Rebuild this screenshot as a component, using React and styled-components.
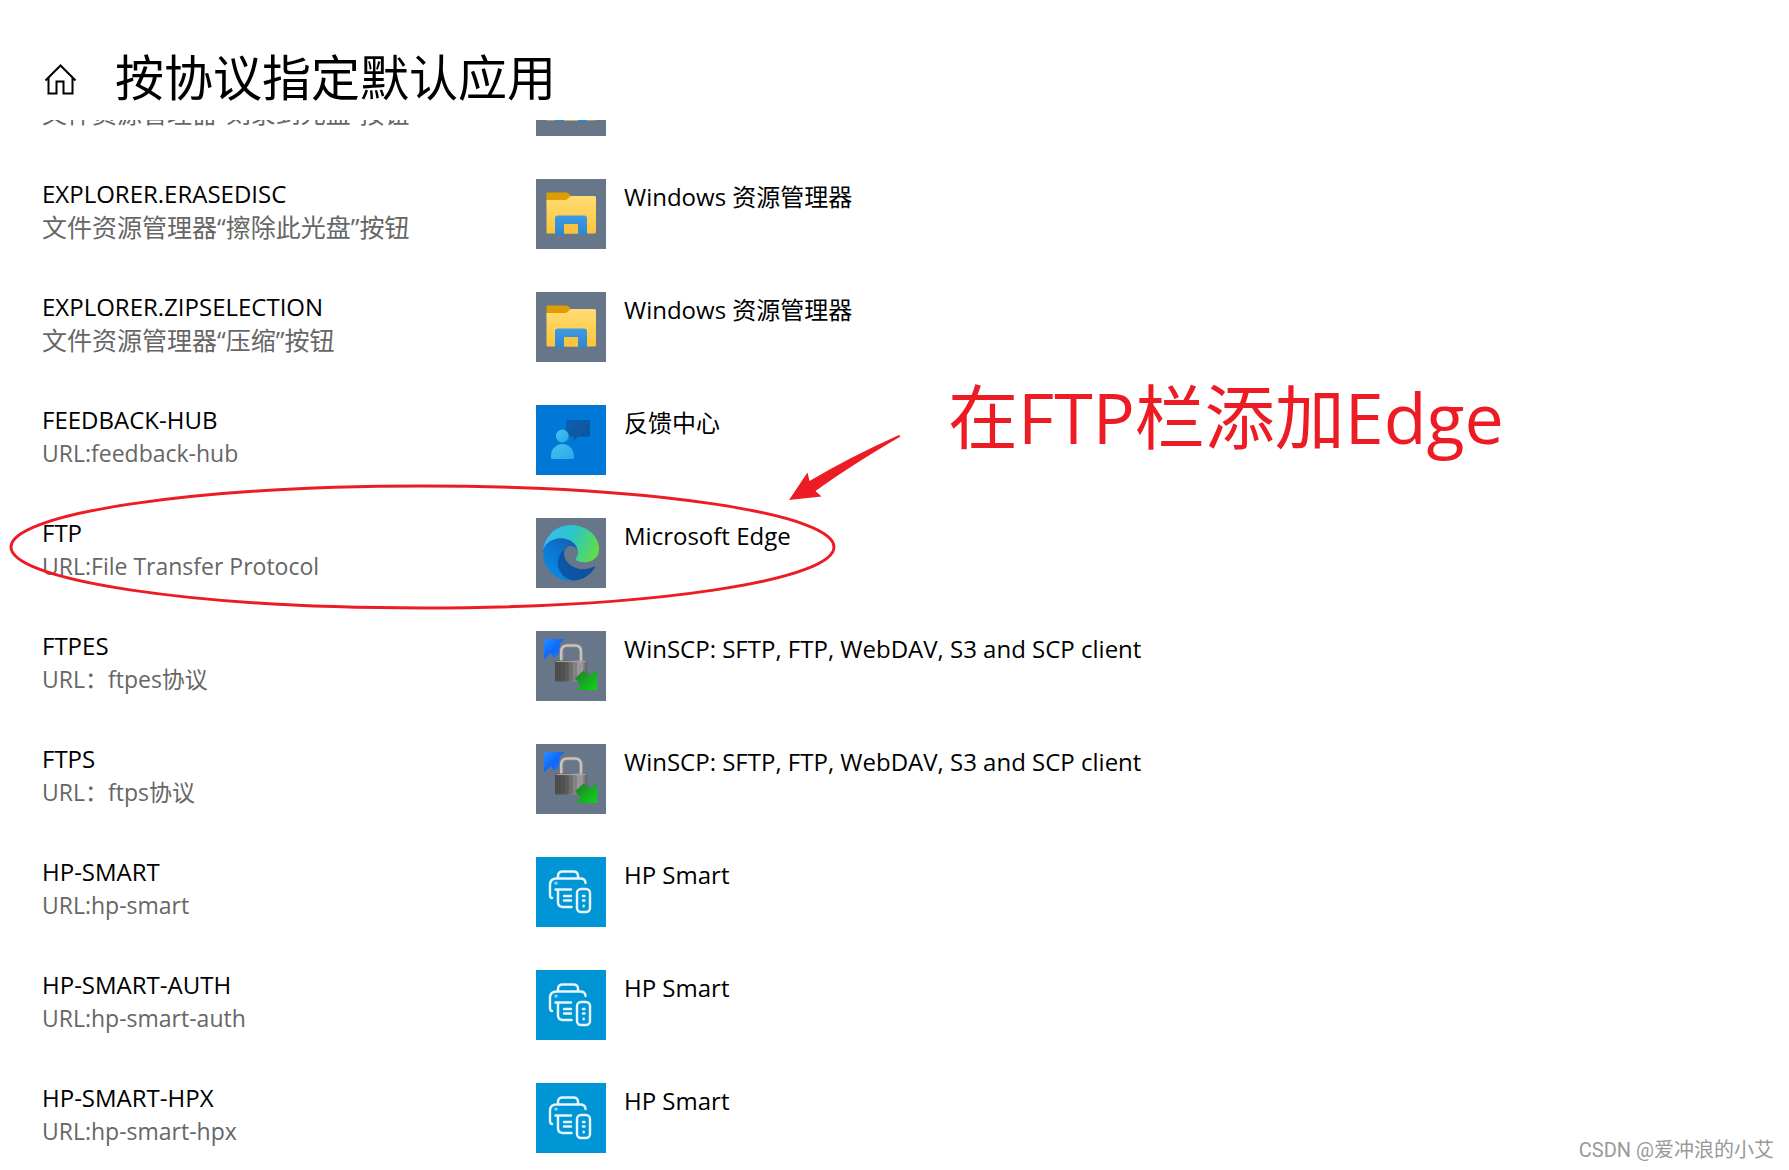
import React from "react"
import styled, { createGlobalStyle } from "styled-components"

const GlobalStyle = createGlobalStyle`
  * {
    box-sizing: border-box;
  }
  body {
    margin: 0;
    background: #fff;
    color: #000;
    font-family: "Open Sans", "Noto Sans CJK SC", sans-serif;
    font-size: 24px;
    line-height: 33px;
  }
`

const FolderIcon = () => (
  <svg viewBox="0 0 70 70" aria-hidden="true">
    <defs>
      <linearGradient id="folder" x1="0" y1="0" x2="0" y2="1">
        <stop offset="0" stopColor="#ffdc74" />
        <stop offset="1" stopColor="#fcc537" />
      </linearGradient>
      <linearGradient id="stand" x1="0" y1="0" x2="0" y2="1">
        <stop offset="0" stopColor="#3e9ae6" />
        <stop offset="1" stopColor="#2f86cb" />
      </linearGradient>
    </defs>
    <path d="M11.500 13.500H30q1.500 0 2.500 1l3 3v8H10.500v-11q0-1 1-1z" fill="#de9d00" />
    <path d="M10.500 21H29q1.500 0 2.500-1l2-2q1-1 2.500-1h22.500q1.500 0 1.500 1.500V53q0 1.500-1.500 1.500h-47q-1 0-1-1z" fill="url(#folder)" />
    <path d="M19 56V39.500q0-3 3-3h26q3 0 3 3V56h-9V46q0-1-1-1H29q-1 0-1 1v10z" fill="url(#stand)" />
    <path d="M28 54.500V46q0-1 1-1h12q1 0 1 1v8.500z" fill="#f8c440" />
  </svg>
)

const FeedbackIcon = () => (
  <svg viewBox="0 0 70 70" aria-hidden="true">
    <defs>
      <linearGradient id="bubble" x1="0" y1="0" x2="1" y2="1">
        <stop offset="0" stopColor="#0f5fae" />
        <stop offset="1" stopColor="#0d529c" />
      </linearGradient>
      <linearGradient id="person" x1="0" y1="0" x2="1" y2="1">
        <stop offset="0" stopColor="#40c4f2" />
        <stop offset="1" stopColor="#2aa8e6" />
      </linearGradient>
    </defs>
    <path d="M31 15h22q1 0 1 1v14.500q0 1-1 1H42l-4.500 4.500v-4.500H31q-1 0-1-1V16q0-1 1-1z" fill="url(#bubble)" />
    <circle cx="26.300" cy="31" r="6.400" fill="url(#person)" />
    <path d="M15 53V50.500a11.400 11.400 0 0 1 22.800 0V53q0 1-1 1H16q-1 0-1-1z" fill="url(#person)" />
  </svg>
)

const EdgeIcon = () => (
  <svg viewBox="0 0 70 70" aria-hidden="true">
    <defs>
      <linearGradient id="edgeDark" x1="60" y1="178" x2="240" y2="178" gradientUnits="userSpaceOnUse">
        <stop offset="0" stopColor="#0b57a8" />
        <stop offset="1" stopColor="#124f9e" />
      </linearGradient>
      <linearGradient id="edgeBlue" x1="150" y1="90" x2="45" y2="210" gradientUnits="userSpaceOnUse">
        <stop offset="0" stopColor="#155fae" />
        <stop offset="0.500" stopColor="#0a76d2" />
        <stop offset="1" stopColor="#0b86dc" />
      </linearGradient>
      <linearGradient id="edgeTop" x1="20" y1="50" x2="235" y2="140" gradientUnits="userSpaceOnUse">
        <stop offset="0" stopColor="#35bdf2" />
        <stop offset="0.450" stopColor="#2dc6c6" />
        <stop offset="0.750" stopColor="#46d384" />
        <stop offset="1" stopColor="#61dc4c" />
      </linearGradient>
    </defs>
    <g transform="translate(7 7) scale(.21875)">
      <path d="M231.070 190.540c-3.420 1.780-6.930 3.380-10.540 4.780a101.930 101.930 0 0 1-35.870 6.420c-47.280 0-88.470-32.520-88.470-74.260a31.450 31.450 0 0 1 16.420-27.310c-42.770 1.800-53.760 46.370-53.760 72.480 0 73.830 68.040 81.310 82.700 81.310 7.900 0 19.820-2.300 26.980-4.550l1.300-.44a128.340 128.340 0 0 0 66.590-52.800 4 4 0 0 0-5.360-5.620z" fill="url(#edgeDark)" />
      <path d="M105.730 241.420a79.200 79.200 0 0 1-22.740-21.340 80.720 80.720 0 0 1 29.620-120c3.130-1.500 8.470-4.080 15.580-3.940a32.350 32.350 0 0 1 25.690 13 31.880 31.880 0 0 1 6.360 18.660c0-.2 24.470-79.600-80.060-79.600-43.900 0-80 41.660-80 78.210a130.150 130.150 0 0 0 12.110 56 128.100 128.100 0 0 0 156.380 67.110 75.540 75.540 0 0 1-62.780-8z" fill="url(#edgeBlue)" />
      <path d="M152.330 148.860c-.81 1.050-3.300 2.500-3.300 5.660 0 2.610 1.700 5.120 4.720 7.230 14.380 10 41.490 8.680 41.560 8.680a59.560 59.560 0 0 0 30.270-8.350A61.380 61.380 0 0 0 256 109.190c.26-22.410-8-37.310-11.340-43.910C223.460 23.840 177.720 0 128 0A128 128 0 0 0 0 126.200c.48-36.540 36.800-66.050 80-66.050 3.500 0 23.460.34 42 10.070 16.340 8.580 24.900 18.940 30.850 29.210 6.180 10.670 7.280 24.150 7.280 29.520 0 5.370-2.740 13.330-7.800 19.910z" fill="url(#edgeTop)" />
    </g>
  </svg>
)

const WinScpIcon = () => (
  <svg viewBox="0 0 70 70" aria-hidden="true">
    <defs>
      <linearGradient id="lock" x1="0" y1="0" x2="1" y2="0">
        <stop offset="0" stopColor="#4a4a4a" />
        <stop offset="0.350" stopColor="#5a5a5a" />
        <stop offset="0.600" stopColor="#858585" />
        <stop offset="0.800" stopColor="#a8a8a8" />
        <stop offset="1" stopColor="#5d5d5d" />
      </linearGradient>
      <linearGradient id="up" x1="0" y1="0" x2="1" y2="1">
        <stop offset="0" stopColor="#2a8cff" />
        <stop offset="0.500" stopColor="#0b68fa" />
        <stop offset="1" stopColor="#3a78d8" />
      </linearGradient>
      <linearGradient id="down" x1="0" y1="0" x2="1" y2="1">
        <stop offset="0" stopColor="#2a6d33" />
        <stop offset="0.500" stopColor="#18a824" />
        <stop offset="1" stopColor="#0bd80f" />
      </linearGradient>
    </defs>
    <path d="M8 8h20.500L23 13.500l4 5.500-9 8-3.500-5L8 28.500z" fill="url(#up)" />
    <path d="M25.500 31V21q0-6.500 6-6.500h7.500q6 0 6 6.500v10" fill="none" stroke="#7c7c7c" strokeWidth="5" />
    <path d="M25.200 31V21q0-6.500 6.300-6.500h7.500q6 0 6 6.500v10" fill="none" stroke="#c4c4c4" strokeWidth="2.500" />
    <rect x="19" y="29.500" width="32" height="21" rx="1.500" fill="url(#lock)" />
    <path d="M20 30.500h30" stroke="#a2a2a2" />
    <path d="M24 32v17M28 32v17M32 32v17M36 32v17M40 32v17M44 32v17" stroke="#222" strokeOpacity=".25" />
    <path d="M39 47.500 47.500 39.500 55 44.500 61 38.500V59H40l4.500-4.500z" fill="url(#down)" />
  </svg>
)

const PrinterIcon = () => (
  <svg viewBox="0 0 70 70" fill="none" stroke="#e8f5fc" strokeWidth="2.400" strokeLinecap="round" strokeLinejoin="round" aria-hidden="true">
    <path d="M22 20.500V19q0-4.500 4.500-4.500h11q4.500 0 4.500 4.500v1.500" />
    <path d="M16 41q-2 0-2-3.500V28q0-6.500 6.500-6.500H44q5.500 0 5.500 4.500" />
    <path d="M19.500 32.500h15.500M22 33v12q0 5 5 5h8.500M28 39h7M28 43.500h7" />
    <rect x="41" y="32" width="13" height="23" rx="4" />
    <path d="M47 39h1.500M47 43.500h1.500M47.700 48.700v.6" />
    <circle cx="20" cy="26" r=".4" />
  </svg>
)

const protocols = [
  { name: "EXPLORER.ERASEDISC", desc: "文件资源管理器“擦除此光盘”按钮", zh: true, app: "Windows 资源管理器", icon: FolderIcon },
  { name: "EXPLORER.ZIPSELECTION", desc: "文件资源管理器“压缩”按钮", zh: true, app: "Windows 资源管理器", icon: FolderIcon },
  { name: "FEEDBACK-HUB", desc: "URL:feedback-hub", app: "反馈中心", icon: FeedbackIcon, tile: "#0078d7" },
  { name: "FTP", desc: "URL:File Transfer Protocol", app: "Microsoft Edge", icon: EdgeIcon },
  { name: "FTPES", desc: "URL：ftpes协议", app: "WinSCP: SFTP, FTP, WebDAV, S3 and SCP client", icon: WinScpIcon },
  { name: "FTPS", desc: "URL：ftps协议", app: "WinSCP: SFTP, FTP, WebDAV, S3 and SCP client", icon: WinScpIcon },
  { name: "HP-SMART", desc: "URL:hp-smart", app: "HP Smart", icon: PrinterIcon, tile: "#0096d6" },
  { name: "HP-SMART-AUTH", desc: "URL:hp-smart-auth", app: "HP Smart", icon: PrinterIcon, tile: "#0096d6" },
  { name: "HP-SMART-HPX", desc: "URL:hp-smart-hpx", app: "HP Smart", icon: PrinterIcon, tile: "#0096d6" },
]

const App = () => {
  return (
    <Page>
      <GlobalStyle />
      <Header>
        <HomeLink href="/" aria-label="主页">
          <svg width="32" height="32" viewBox="0 0 32 32" fill="none" stroke="#000" strokeWidth="2">
            <path d="M1.500 17.500 16.500 2.500l15 15M4.500 15v15.500h8V18.500h7v12h9V15" />
          </svg>
        </HomeLink>
        <Title>按协议指定默认应用</Title>
      </Header>
      <List>
        {/* scrolled away, only its lower edge is left below the header */}
        <CutRow>
          <Protocol>
            <Desc $zh>文件资源管理器“刻录到光盘”按钮</Desc>
          </Protocol>
          <Tile>
            <FolderIcon />
          </Tile>
        </CutRow>
        {protocols.map(({ name, desc, zh, app, icon: Icon, tile }) => (
          <Row key={name}>
            <Protocol>
              <Name>{name}</Name>
              <Desc $zh={zh}>{desc}</Desc>
            </Protocol>
            <AppButton type="button">
              <Tile $color={tile}>
                <Icon />
              </Tile>
              <AppName>{app}</AppName>
            </AppButton>
          </Row>
        ))}
      </List>
      <Marks viewBox="0 0 920 200" aria-hidden="true">
        <ellipse cx="422.500" cy="127" rx="411.500" ry="61" fill="none" stroke="#ed1c24" strokeWidth="3" />
        <path d="M789 80 807.500 52.500 809.500 61Q850 37 899 15L900.500 16.500Q850 46 815.500 71L821.500 76.500z" fill="#ed1c24" />
      </Marks>
      <Note>在FTP栏添加Edge</Note>
      <Watermark>CSDN @爱冲浪的小艾</Watermark>
    </Page>
  )
}

const Page = styled.main`
  position: relative;
  min-height: 100vh;
  overflow: hidden;
`

const Header = styled.header`
  display: flex;
  align-items: center;
  gap: 39px;
  height: 120px;
  padding: 38px 44px 0;
`

const HomeLink = styled.a`
  display: flex;
`

const Title = styled.h1`
  margin: 0;
  padding-bottom: 4px;
  font-size: 49px;
  line-height: 60px;
  font-weight: 400;
`

const List = styled.ul`
  display: flex;
  flex-direction: column;
  gap: 41px;
  margin: 0;
  padding: 0 42px 16px;
  list-style: none;
`

const Row = styled.li`
  display: grid;
  grid-template-columns: 494px 1fr;
  align-items: start;
`

const CutRow = styled(Row)`
  grid-template-rows: 16px;
  align-items: end;
  overflow: hidden;
`

const Protocol = styled.div`
  display: flex;
  flex-direction: column;
`

const Name = styled.span`
  color: #000;
`

const Desc = styled.span`
  padding-top: 1px;
  color: #666;
  font-size: ${({ $zh }) => ($zh ? "25px" : "23px")};
  ${CutRow} & {
    padding-bottom: 6px;
  }
`

const AppButton = styled.button`
  display: flex;
  align-items: flex-start;
  gap: 18px;
  padding: 2px 0 0;
  border: none;
  background: none;
  color: #000;
  font: inherit;
  text-align: left;
`

const Tile = styled.span`
  display: block;
  flex: none;
  width: 70px;
  height: 70px;
  background: ${({ $color }) => $color || "#68768a"};
  svg {
    display: block;
  }
`

const AppName = styled.span`
  padding-top: 1px;
`

const Marks = styled.svg`
  position: absolute;
  z-index: 2;
  top: 420px;
  left: 0;
  width: 920px;
  height: 200px;
  pointer-events: none;
`

const Note = styled.p`
  position: absolute;
  z-index: 2;
  top: 370px;
  left: 948px;
  margin: 0;
  color: #ed1c24;
  font-size: 70px;
  line-height: 94px;
  white-space: nowrap;
`

const Watermark = styled.p`
  position: absolute;
  right: 15px;
  bottom: 6px;
  margin: 0;
  color: #999;
  font-family: Roboto, "Noto Sans CJK SC", sans-serif;
  font-size: 20px;
  line-height: 28px;
`

export default App
